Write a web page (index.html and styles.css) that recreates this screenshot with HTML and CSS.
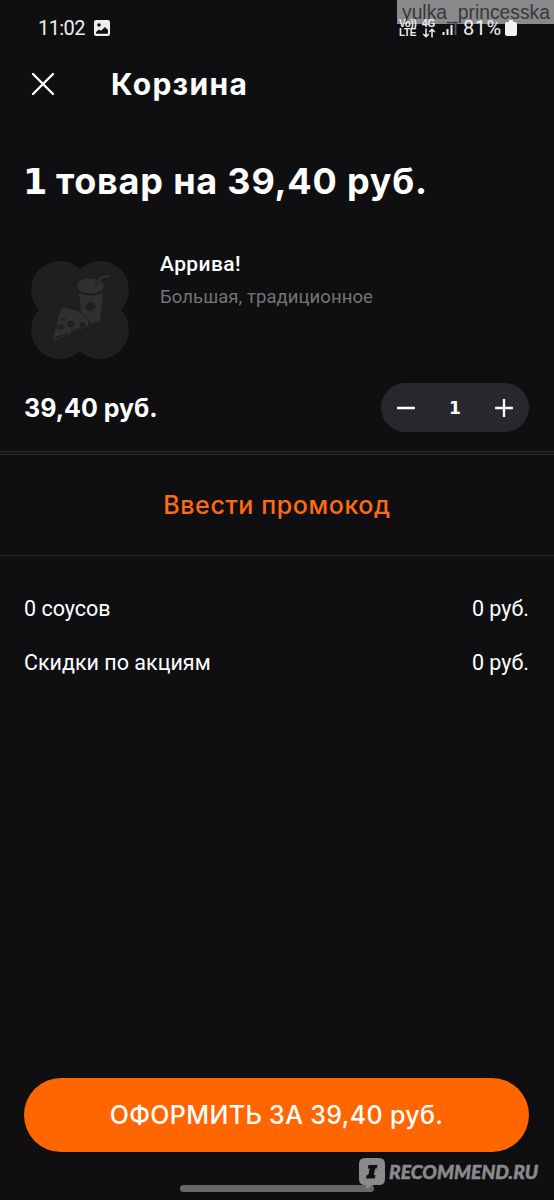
FILE: index.html
```html
<!DOCTYPE html>
<html lang="ru">
<head>
<meta charset="utf-8">
<meta name="viewport" content="width=device-width">
<title>Корзина</title>
<link rel="stylesheet" href="styles.css">
</head>
<body>
<div class="screen">
  <div class="user">yulka_princesska</div>
  <header class="status">
    <span class="clock">11:02</span>
    <svg class="photo" viewBox="0 0 16 16"><rect width="16" height="16" rx="2.2" fill="#eee"/><circle cx="5" cy="5" r="1.8" fill="#101012"/><path d="M2 13v-1l3-2.6 2 1.3L11 7l3 3v3q0 .8-.8.8H2.8Q2 13.800 2 13Z" fill="#101012"/></svg>
    <span class="volte"><span>Vo))</span><span>LTE</span></span>
    <span class="net"><span>4G</span><svg viewBox="0 0 14 10"><path d="M4 0.500v8M1.200 6 4 8.800 6.800 6M10 9.500v-8M7.200 4 10 1.200 12.800 4" fill="none" stroke="#eee" stroke-width="1.500"/></svg></span>
    <svg class="signal" viewBox="0 0 15 14"><path d="M1.500 14v-3M5.500 14V8M9.500 14V4" stroke="#eee" stroke-width="2"/><path d="M13.500 14V0" stroke="#55555a" stroke-width="2"/></svg>
    <span class="percent">81%</span>
    <svg class="battery" viewBox="0 0 12 16"><path d="M4 0h4v2h2q2 0 2 2v10q0 2-2 2H2q-2 0-2-2V4q0-2 2-2h2Z" fill="#f2f2f2"/></svg>
  </header>
  <div class="appbar">
    <svg class="close" viewBox="0 0 24 24"><path d="M2 2 22 22M22 2 2 22" stroke="#fff" stroke-width="2.300" stroke-linecap="round"/></svg>
    <h1>Корзина</h1>
  </div>
  <h2 class="summary"><span class="one">1</span> товар на 39,40 руб.</h2>
  <section class="item">
    <svg class="thumb" viewBox="0 0 98 98">
      <g fill="#1f1f21"><circle cx="29" cy="29" r="29"/><circle cx="69" cy="29" r="29"/><circle cx="29" cy="69" r="29"/><circle cx="69" cy="69" r="29"/><path d="M29 29h40v40H29Z"/></g>
      <path d="M48 32q11 5 24 0L69 59q-4 3-10 3-4-7-9-11Z" fill="#303032"/>
      <ellipse cx="59.500" cy="25" rx="14.500" ry="9" fill="#1f1f21"/>
      <ellipse cx="59.500" cy="25" rx="13.500" ry="7.500" fill="#303032"/>
      <path d="m65 23 5-7 8-1" fill="none" stroke="#1f1f21" stroke-width="4"/>
      <path d="m66 22 4-5.500 8-1.500" fill="none" stroke="#303032" stroke-width="2.400"/>
      <path d="m59.500 40 2 2h2v2l2 1.500-2 1.500v2h-2l-2 2-2-2h-2v-2l-2-1.500 2-1.500v-2h2Z" fill="#202022"/>
      <path d="M28 52q2-7 9-5 14 2 19 10 4 5 0 9L21 81Z" fill="#303032" stroke="#1f1f21"/>
      <g fill="#202022"><ellipse cx="29.500" cy="66" rx="4" ry="2.700"/><ellipse cx="40" cy="63" rx="4" ry="3"/><circle cx="51.500" cy="64" r="3"/><ellipse cx="32" cy="58.500" rx="3" ry="1.100"/></g>
      <path d="m24 77 13-5m3-1 9-4" stroke="#202022" stroke-width="1.400"/>
    </svg>
    <div class="info"><h3>Аррива!</h3><p>Большая, традиционное</p></div>
  </section>
  <div class="buy">
    <strong>39,40 руб.</strong>
    <div class="stepper">
      <svg viewBox="0 0 18 18"><path d="M.5 9h17" stroke="#fff" stroke-width="2.300" stroke-linecap="round"/></svg>
      <span>1</span>
      <svg viewBox="0 0 18 18"><path d="M.5 9h17M9 .5v17" stroke="#fff" stroke-width="2.300" stroke-linecap="round"/></svg>
    </div>
  </div>
  <div class="divider"></div>
  <div class="promo"><span>Ввести промокод</span></div>
  <div class="totals">
    <div class="row"><span>0 соусов</span><span>0 руб.</span></div>
    <div class="row"><span>Скидки по акциям</span><span>0 руб.</span></div>
  </div>
  <div class="checkout"><span>ОФОРМИТЬ ЗА 39,40 руб.</span></div>
  <div class="gesture"></div>
  <div class="brand">
    <svg viewBox="0 0 26 31"><path d="M6 0h14q6 0 6 6v15q0 6-6 6h-6l-7 4v-4H6q-6 0-6-6V6q0-6 6-6Z" fill="#8a8a8c"/><path d="M9.500 7h9l-.8 3.500h-1.500l-1.400 6.500h1.700l-.8 3.500H7l.8-3.500h1.500l1.400-6.500H8.800Z" fill="#101012"/></svg>
    <span>RECOMMEND.RU</span>
  </div>
</div>
</body>
</html>
```
FILE: styles.css
```css
* { box-sizing: border-box; }
body, h1, h2, h3, p { margin: 0; }
body { background: #0f0f11; }
svg { display: block; flex: none; }
.screen { position: relative; display: flex; flex-direction: column; width: 554px; height: 1200px; overflow: hidden; background: #0f0f11; color: #fff; font-family: Inter, sans-serif; white-space: nowrap; }
.status { position: relative; display: flex; align-items: center; height: 56px; padding-left: 38px; color: #eee; }
.clock { width: 56px; font: 20px/24px Roboto, sans-serif; letter-spacing: -.6px; }
.photo { width: 16px; height: 16px; }
.volte, .net { display: flex; flex-direction: column; font: bold 10px/9px "Liberation Sans", sans-serif; }
.volte { width: 23px; margin-left: 289px; letter-spacing: -.3px; }
.net { width: 20px; }
.net svg { width: 14px; height: 10px; }
.signal { width: 15px; height: 14px; }
.percent { width: 42px; margin-left: 6px; font: 20px/24px Roboto, sans-serif; letter-spacing: .5px; }
.battery { width: 12px; height: 16px; }
.appbar { display: flex; align-items: center; height: 56px; padding-left: 31px; }
.close { width: 24px; height: 24px; margin-right: 56px; }
h1 { font-size: 30px; line-height: 40px; font-weight: 700; letter-spacing: 1.300px; }
.summary { margin-top: 46px; padding-left: 23px; font-size: 36px; line-height: 46px; font-weight: 700; letter-spacing: .8px; }
.one { font-family: "DejaVu Sans", sans-serif; font-size: 35px; line-height: 40px; letter-spacing: -.8px; }
.item { display: flex; height: 110px; margin-top: 50px; padding-left: 31px; }
.thumb { width: 98px; height: 98px; margin: 7px 31px 0 0; }
.info { margin-top: -2px; }
h3 { font: 500 21px/24px Roboto, sans-serif; letter-spacing: .4px; }
.item p { margin-top: 9px; color: #747476; font: 18.500px/24px Roboto, sans-serif; letter-spacing: .08px; }
.buy { display: flex; justify-content: space-between; align-items: center; height: 49px; margin-top: 19px; padding: 0 25px 0 24px; }
.buy strong { font-size: 25px; font-weight: 700; }
.stepper { display: flex; justify-content: space-between; align-items: center; width: 148px; height: 49px; padding: 0 16px; border-radius: 25px; background: #28282c; }
.stepper svg { width: 18px; height: 18px; }
.stepper span { font: bold 17px/20px "DejaVu Sans", sans-serif; }
.divider { height: 4px; margin-top: 19px; border: solid #29292b; border-width: 1px 0; background: #18181a; }
.promo { display: flex; justify-content: center; align-items: center; height: 101px; border-bottom: 1px solid #29292b; color: #ff6a13; font-size: 25px; font-weight: 500; letter-spacing: .6px; }
.totals { display: flex; flex-direction: column; gap: 24px; padding: 38px 25px 0 24px; font: 21.500px/30px Roboto, sans-serif; }
.row { display: flex; justify-content: space-between; }
.checkout { display: flex; justify-content: center; align-items: center; height: 74px; margin: auto 25px 33px 24px; border-radius: 37px; background: #ff6600; font-size: 25px; font-weight: 500; letter-spacing: .36px; }
.gesture { flex: none; width: 194px; height: 7px; margin: 0 0 8px 180px; border-radius: 4px; background: #68686a; }
.user { position: absolute; top: 0; right: 0; width: 157px; height: 24px; padding-left: 5px; background: #8a8a8c; color: #38383a; font: 19.300px/25px "Liberation Sans", sans-serif; }
.brand { position: absolute; top: 1158px; left: 359px; display: flex; align-items: center; gap: 4px; color: #8a8a8c; font: italic 900 19.300px/26px Lato, sans-serif; -webkit-text-stroke: .5px #8a8a8c; }
.brand svg { width: 26px; height: 31px; }
.brand span { position: relative; top: -2px; }
```
